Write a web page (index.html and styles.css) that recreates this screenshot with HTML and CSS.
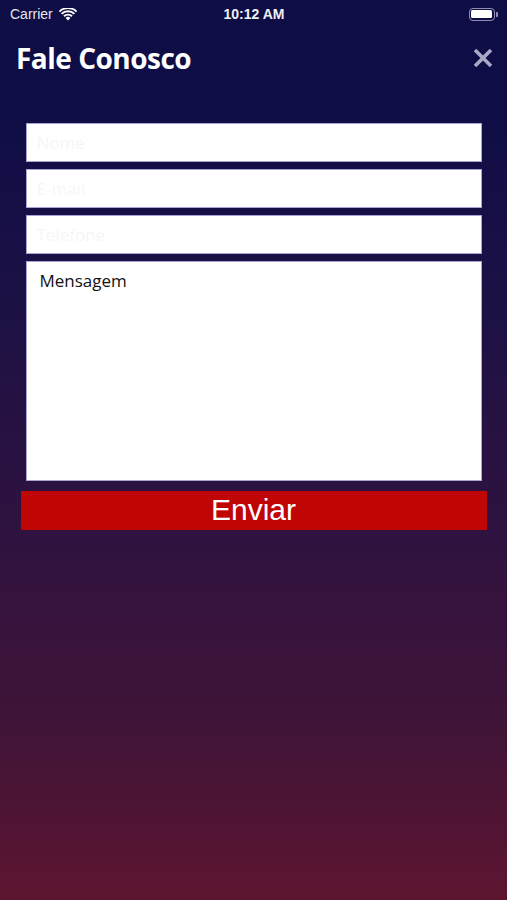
FILE: index.html
```html
<!DOCTYPE html>
<html lang="pt">
  <head>
    <meta charset="UTF-8" />
    <meta name="viewport" content="width=device-width, initial-scale=1.0" />
    <title>Fale Conosco</title>
    <link rel="stylesheet" href="styles.css">
  </head>
  <body>
    <!-- Status bar -->
    <div class="status-bar">
      <div class="status-left">
        <span>Carrier</span>
        <svg class="wifi" width="18" height="13" viewBox="0 0 18 13">
          <path d="M9 12.5 L6.6 9.9 A3.4 3.4 0 0 1 11.4 9.9 Z" fill="#fff"/>
          <path d="M4.3 7.6 A6.6 6.6 0 0 1 13.7 7.6 L12.3 9 A4.6 4.6 0 0 0 5.7 9 Z" fill="#fff"/>
          <path d="M1.9 5.2 A10 10 0 0 1 16.1 5.2 L14.7 6.6 A8 8 0 0 0 3.3 6.6 Z" fill="#fff"/>
          <path d="M-0.3 3 A13.2 13.2 0 0 1 18.3 3 L17 4.3 A11.3 11.3 0 0 0 1 4.3 Z" fill="#fff"/>
        </svg>
      </div>
      <div class="status-time">10:12 AM</div>
      <div class="status-right">
        <div class="battery"><div class="battery-level"></div></div>
        <div class="battery-cap"></div>
      </div>
    </div>

    <!-- Header -->
    <header class="header">
      <h1>Fale Conosco</h1>
      <svg class="close" width="22" height="22" viewBox="0 0 22 22">
        <path d="M3 3 L19 19 M19 3 L3 19" stroke="#a9a8c6" stroke-width="3.6" stroke-linecap="butt"/>
      </svg>
    </header>

    <!-- Contact form -->
    <form class="contact-form">
      <input class="field" type="text" placeholder="Nome" />
      <input class="field" type="email" placeholder="E-mail" />
      <input class="field" type="tel" placeholder="Telefone" />
      <textarea class="field message">Mensagem</textarea>
      <button type="submit" class="send">Enviar</button>
    </form>
  </body>
</html>
```

FILE: styles.css
```css
* {
  box-sizing: border-box;
}
html,
body {
  height: 100%;
}
body {
  margin: 0;
  font-family: "Open Sans", Arial, sans-serif;
  color: #fff;
  background: linear-gradient(
    to bottom,
    #0e0d46 0px,
    #0f0d46 110px,
    #1c1145 300px,
    #2e1240 520px,
    #3f1438 720px,
    #5d1530 900px
  );
  min-height: 900px;
}
.status-bar {
  height: 28px;
  display: flex;
  align-items: center;
  justify-content: space-between;
  padding: 0 9px 0 10px;
  font-family: "Liberation Sans", Arial, sans-serif;
  font-size: 14px;
}
.status-left {
  display: flex;
  align-items: center;
  gap: 6px;
  width: 120px;
  color: #e6e6ee;
}
.status-time {
  font-weight: bold;
  color: #f0f0f4;
}
.status-right {
  width: 120px;
  display: flex;
  justify-content: flex-end;
  align-items: center;
}
.battery {
  width: 26px;
  height: 13px;
  border: 1.5px solid #8e8db0;
  border-radius: 4px;
  padding: 1.5px;
}
.battery-level {
  width: 100%;
  height: 100%;
  background: #fff;
  border-radius: 1.5px;
}
.battery-cap {
  width: 2px;
  height: 5px;
  background: #8e8db0;
  border-radius: 0 1px 1px 0;
  margin-left: 1px;
}
.header {
  display: flex;
  align-items: center;
  justify-content: space-between;
  padding: 0 13px 0 16px;
  height: 60px;
}
.header h1 {
  margin: 0;
  font-family: "Open Sans", sans-serif;
  font-size: 28px;
  font-weight: 700;
  letter-spacing: -0.5px;
}
.contact-form {
  display: flex;
  flex-direction: column;
  align-items: center;
  padding-top: 35px;
}
.field {
  display: block;
  width: 456px;
  height: 39px;
  margin: 0 0 7px;
  padding: 0 10px;
  border: 1px solid #a6a4d2;
  background: #fff;
  font-family: "Open Sans", sans-serif;
  font-size: 17px;
  color: #111;
  outline: none;
}
.field::placeholder {
  color: #f6f6f9;
}
.message {
  height: 220px;
  margin-bottom: 10px;
  padding: 7px 13px;
  resize: none;
  line-height: 24px;
}
.send {
  width: 466px;
  height: 39px;
  border: none;
  background: #c00505;
  color: #fff;
  font-family: "Liberation Sans", Arial, sans-serif;
  font-size: 30px;
  line-height: 36px;
  padding: 0 0 2px;
  cursor: pointer;
}
```
